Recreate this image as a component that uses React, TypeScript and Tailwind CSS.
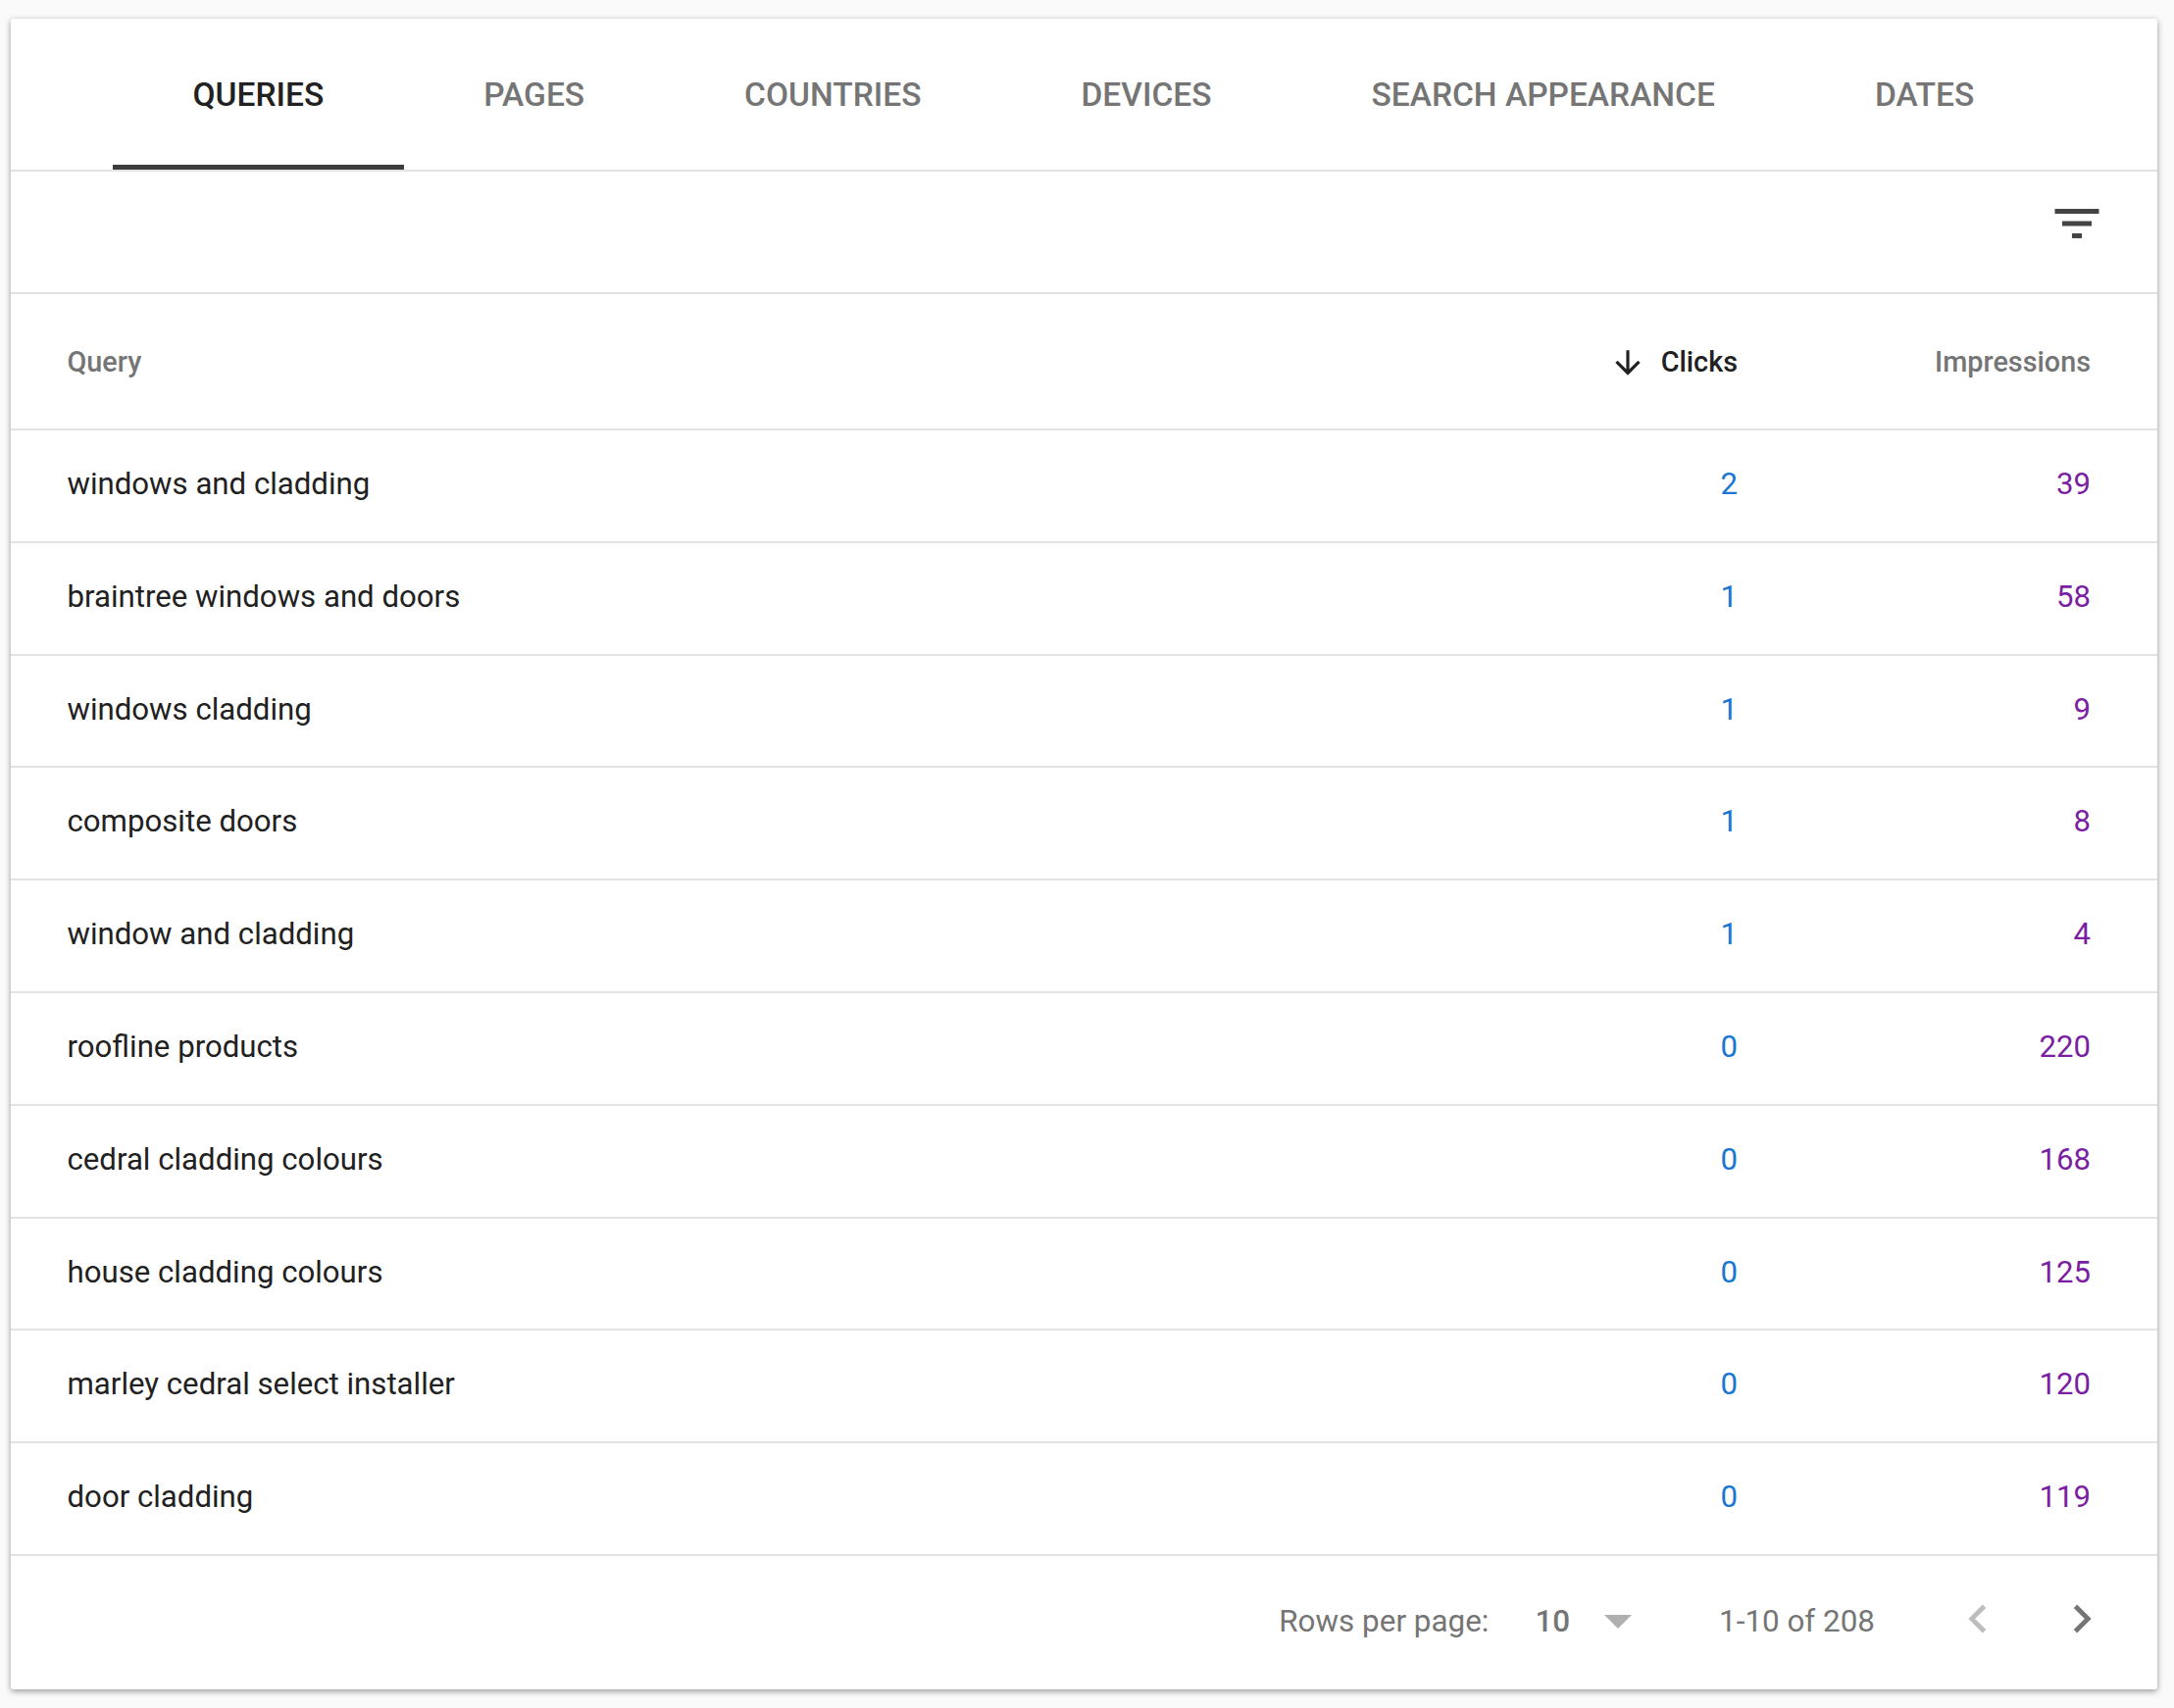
const tabs = ["QUERIES", "PAGES", "COUNTRIES", "DEVICES", "SEARCH APPEARANCE", "DATES"];

const rows = [
  { query: "windows and cladding", clicks: 2, impressions: 39 },
  { query: "braintree windows and doors", clicks: 1, impressions: 58 },
  { query: "windows cladding", clicks: 1, impressions: 9 },
  { query: "composite doors", clicks: 1, impressions: 8 },
  { query: "window and cladding", clicks: 1, impressions: 4 },
  { query: "roofline products", clicks: 0, impressions: 220 },
  { query: "cedral cladding colours", clicks: 0, impressions: 168 },
  { query: "house cladding colours", clicks: 0, impressions: 125 },
  { query: "marley cedral select installer", clicks: 0, impressions: 120 },
  { query: "door cladding", clicks: 0, impressions: 119 },
];

function App() {
  return (
    <div className="h-[1742px] bg-[#fafafa] pt-[19px] pl-[11px] pr-[17px] font-['Roboto',sans-serif]">
      <div className="h-[1704px] rounded-[3px] bg-white shadow-[0_2px_6px_rgba(0,0,0,0.4)]">
        <div className="flex h-[156px] border-b-2 border-[#e2e2e2] pl-[104px]">
          {tabs.map((tab, index) => (
            <div
              key={tab}
              className={
                index === 0
                  ? "flex h-[154px] items-start border-b-[5px] border-[#3c3c3c] px-[81.5px] pt-[58px] text-[33.5px] font-medium leading-[40px] text-[#212121]"
                  : "flex h-[154px] items-start px-[81.5px] pt-[58px] text-[33.5px] font-medium leading-[40px] text-[#757575]"
              }
            >
              {tab}
            </div>
          ))}
        </div>
        <div className="flex h-[125px] items-start justify-end border-b-2 border-[#e2e2e2] pr-[52px] pt-[23px]">
          <svg width="60" height="60" viewBox="0 0 24 24" fill="#444444">
            <path d="M10 18h4v-2h-4v2zM3 6v2h18V6H3zm3 7h12v-2H6v2z" />
          </svg>
        </div>
        <div className="flex h-[139px] items-center border-b-2 border-[#e2e2e2] pl-[57.5px] pr-[68px] pt-[2px] text-[28.8px] font-medium text-[#757575]">
          <div className="flex-1">Query</div>
          <div className="flex items-center text-[#212121]">
            <svg width="38" height="38" viewBox="0 0 24 24" fill="#212121" className="mr-[15px]">
              <path d="M20 12l-1.41-1.41L13 16.17V4h-2v12.17l-5.58-5.6L4 12l8 8 8-8z" />
            </svg>
            Clicks
          </div>
          <div className="w-[360px] text-right">Impressions</div>
        </div>
        {rows.map((row) => (
          <div
            key={row.query}
            className="flex h-[114.8px] items-center border-b-2 border-[#e2e2e2] pb-[2px] pl-[57.5px] pr-[68px] text-[31.2px] text-[#212121]"
          >
            <div className="flex-1">{row.query}</div>
            <div className="text-[#1976d2]">{row.clicks}</div>
            <div className="w-[360px] text-right text-[#7b1fa2]">{row.impressions}</div>
          </div>
        ))}
        <div className="flex h-[134px] items-center justify-end pr-[48px] text-[31.4px] text-[#757575]">
          <span>Rows per page:</span>
          <span className="ml-[47px] font-medium">10</span>
          <svg width="28" height="14" viewBox="0 0 28 14" fill="#b0b0b0" className="ml-[35px]">
            <path d="M0 0h28L14 14z" />
          </svg>
          <span className="ml-[89px]">1-10 of 208</span>
          <svg width="58" height="58" viewBox="0 0 24 24" fill="#bdbdbd" className="ml-[76px] -mt-[6px]">
            <path d="M15.41 7.41L14 6l-6 6 6 6 1.41-1.41L10.83 12z" />
          </svg>
          <svg width="58" height="58" viewBox="0 0 24 24" fill="#757575" className="ml-[48px] -mt-[6px]">
            <path d="M10 6L8.59 7.41 13.17 12l-4.58 4.59L10 18l6-6z" />
          </svg>
        </div>
      </div>
    </div>
  );
}

export default App;
